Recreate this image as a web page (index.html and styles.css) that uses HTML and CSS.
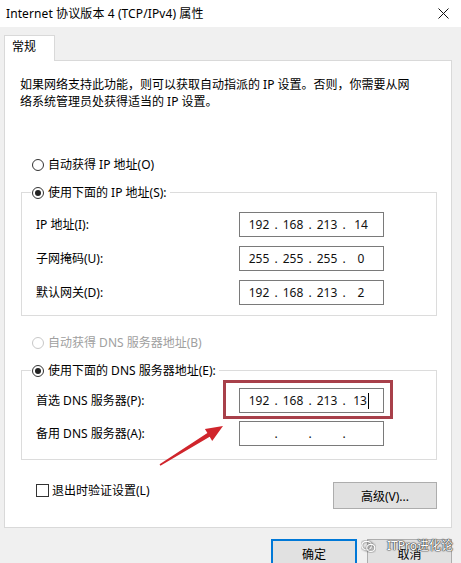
FILE: index.html
```html
<!DOCTYPE html>
<html>
<head>
<meta charset="utf-8">
<link rel="stylesheet" href="styles.css">
</head>
<body>
<div class="window">
  <div class="titlebar">
    <span class="title">Internet 协议版本 4 (TCP/IPv4) 属性</span>
    <svg class="close" viewBox="0 0 11 11"><path d="M0.5 0.5L10.5 10.5M10.5 0.5L0.5 10.5"/></svg>
  </div>
  <div class="client">
    <div class="tab">常规</div>
    <div class="panel">
      <p class="desc">如果网络支持此功能，则可以获取自动指派的 IP 设置。否则，你需要从网<br>络系统管理员处获得适当的 IP 设置。</p>

      <div class="opt first"><span class="radio"></span><span>自动获得 IP 地址(O)</span></div>

      <fieldset class="group g1">
        <legend><span class="opt-in"><span class="radio on"></span><span>使用下面的 IP 地址(S):</span></span></legend>
        <div class="fields">
          <span class="lbl">IP 地址(I):</span>
          <div class="ipbox"><span class="oct">192</span><span class="dot">.</span><span class="oct">168</span><span class="dot">.</span><span class="oct">213</span><span class="dot">.</span><span class="oct">14</span></div>
          <span class="lbl">子网掩码(U):</span>
          <div class="ipbox"><span class="oct">255</span><span class="dot">.</span><span class="oct">255</span><span class="dot">.</span><span class="oct">255</span><span class="dot">.</span><span class="oct">0</span></div>
          <span class="lbl">默认网关(D):</span>
          <div class="ipbox"><span class="oct">192</span><span class="dot">.</span><span class="oct">168</span><span class="dot">.</span><span class="oct">213</span><span class="dot">.</span><span class="oct">2</span></div>
        </div>
      </fieldset>

      <div class="opt disabled mid"><span class="radio"></span><span>自动获得 DNS 服务器地址(B)</span></div>

      <fieldset class="group g2">
        <legend><span class="opt-in"><span class="radio on"></span><span>使用下面的 DNS 服务器地址(E):</span></span></legend>
        <div class="fields dns">
          <span class="lbl">首选 DNS 服务器(P):</span>
          <div class="ipwrap">
            <div class="ipbox"><span class="oct">192</span><span class="dot">.</span><span class="oct">168</span><span class="dot">.</span><span class="oct">213</span><span class="dot">.</span><span class="oct">13<span class="caret"></span></span></div>
            <div class="highlight"></div>
          </div>
          <span class="lbl">备用 DNS 服务器(A):</span>
          <div class="ipbox"><span class="oct"></span><span class="dot">.</span><span class="oct"></span><span class="dot">.</span><span class="oct"></span><span class="dot">.</span><span class="oct"></span></div>
        </div>
      </fieldset>

      <div class="bottomrow">
        <div class="check"><span class="cbox"></span><span>退出时验证设置(L)</span></div>
        <div class="btn adv">高级(V)...</div>
      </div>

      <svg class="arrow" viewBox="0 0 80 60"><polygon points="73,11 62.2,25.9 59.7,21.8 10.4,50.7 9.6,49.3 57.4,18.1 54.9,14"/></svg>
    </div>
    <div class="actions">
      <div class="btn dlg default">确定</div>
      <div class="btn dlg">取消</div>
    </div>
  </div>
  <div class="watermark">
    <svg class="wx" viewBox="0 0 16 14"><ellipse cx="6" cy="6" rx="5.2" ry="4.6"/><ellipse cx="10.5" cy="8.5" rx="4.3" ry="3.8"/></svg>
    <span>ITPro进化论</span>
  </div>
</div>
</body>
</html>
```
FILE: styles.css
```css
* { box-sizing: border-box; }
html, body { margin: 0; padding: 0; }
body {
  width: 461px;
  height: 563px;
  overflow: hidden;
  background: #f0f0f0;
  font-family: "Noto Sans", "Noto Sans CJK SC", sans-serif;
  font-size: 12px;
  color: #000;
}
.window { position: relative; width: 461px; height: 563px; }
.titlebar {
  height: 27px;
  background: #fff;
  display: flex;
  align-items: center;
  justify-content: space-between;
  padding: 0 12px 0 6px;
}
.title { font-size: 12px; line-height: 16px; letter-spacing: 0.1px; }
.close { width: 11px; height: 11px; }
.close path { stroke: #111; stroke-width: 1; fill: none; }

.client { padding: 8px 9px 0 4px; }
.tab {
  width: 51px;
  height: 26px;
  background: #fff;
  border: 1px solid #d9d9d9;
  border-bottom: none;
  position: relative;
  z-index: 1;
  margin-bottom: -1px;
  padding: 2px 0 0 7px;
  line-height: 17px;
}
.panel {
  position: relative;
  width: 448px;
  height: 468px;
  background: #fff;
  border: 1px solid #d9d9d9;
}
.desc { margin: 15px 0 0 15px; line-height: 17px; white-space: nowrap; }

.opt, .opt-in { display: flex; align-items: center; gap: 4px; height: 17px; line-height: 17px; white-space: nowrap; }
.opt { margin-left: 27px; }
.opt.first { margin-top: 46px; }
.opt.mid { margin-top: 18px; }
.radio {
  flex: none;
  width: 12px;
  height: 12px;
  border: 1px solid #333;
  border-radius: 50%;
  background: #fff;
  display: flex;
  align-items: center;
  justify-content: center;
}
.radio.on::after { content: ""; width: 6px; height: 6px; border-radius: 50%; background: #222; }
.disabled { color: #a0a0a0; }
.disabled .radio { border-color: #c8c8c8; }

.group {
  margin: 11px 14px 0 16px;
  padding: 11px 0 10px 14px;
  border: 1px solid #dcdcdc;
  min-width: 0;
}
.group.g2 { padding: 9px 0 13px 14px; }
.group legend { padding: 0 3px 0 1px; margin-left: -5px; line-height: 17px; }

.fields {
  display: grid;
  grid-template-columns: 203px 145px;
  row-gap: 9px;
  align-items: center;
}
.fields.dns { row-gap: 8px; }
.lbl { line-height: 17px; white-space: nowrap; }
.ipwrap { position: relative; }
.ipbox {
  height: 25px;
  border: 1px solid #7a7a7a;
  background: #fff;
  display: flex;
  align-items: center;
  padding-left: 5px;
  font-family: "Noto Sans", sans-serif;
  font-size: 12px;
  color: #111;
}
.oct { width: 28px; text-align: center; display: flex; justify-content: center; align-items: center; }
.dot { width: 6px; text-align: center; }
.caret { display: inline-block; width: 1px; height: 16px; background: #000; margin-left: 1px; }
.highlight {
  position: absolute;
  left: -16px;
  top: -8px;
  width: 170px;
  height: 39px;
  border: 3px solid #a8404a;
}

.bottomrow {
  display: flex;
  justify-content: space-between;
  align-items: flex-start;
  margin: 22px 14px 0 31px;
}
.check { display: flex; align-items: center; gap: 3px; height: 17px; line-height: 17px; }
.cbox { width: 13px; height: 13px; border: 1px solid #333; background: #fff; }
.btn {
  background: #e1e1e1;
  border: 1px solid #adadad;
  display: flex;
  align-items: center;
  justify-content: center;
}
.btn.adv { width: 104px; height: 27px; }

.arrow { position: absolute; left: 145px; top: 354px; width: 80px; height: 60px; }
.arrow polygon { fill: #d0252c; }

.actions { display: flex; justify-content: flex-end; gap: 10px; padding-top: 11px; }
.btn.dlg { width: 85px; height: 30px; }
.btn.default { width: 86px; border: 2px solid #0078d7; }

.watermark {
  position: absolute;
  left: 361px;
  top: 538px;
  display: flex;
  align-items: center;
  gap: 11px;
  color: #fff;
  font-size: 12px;
  line-height: 16px;
  text-shadow: 0 0 1px #333, 0 0 1px #333, 0 0 1px #444, 0 0 2px #666;
}
.wx { width: 15px; height: 13px; }
.wx ellipse { fill: none; stroke: #fff; stroke-width: 1.4; filter: drop-shadow(0 0 1px #333); }
```
